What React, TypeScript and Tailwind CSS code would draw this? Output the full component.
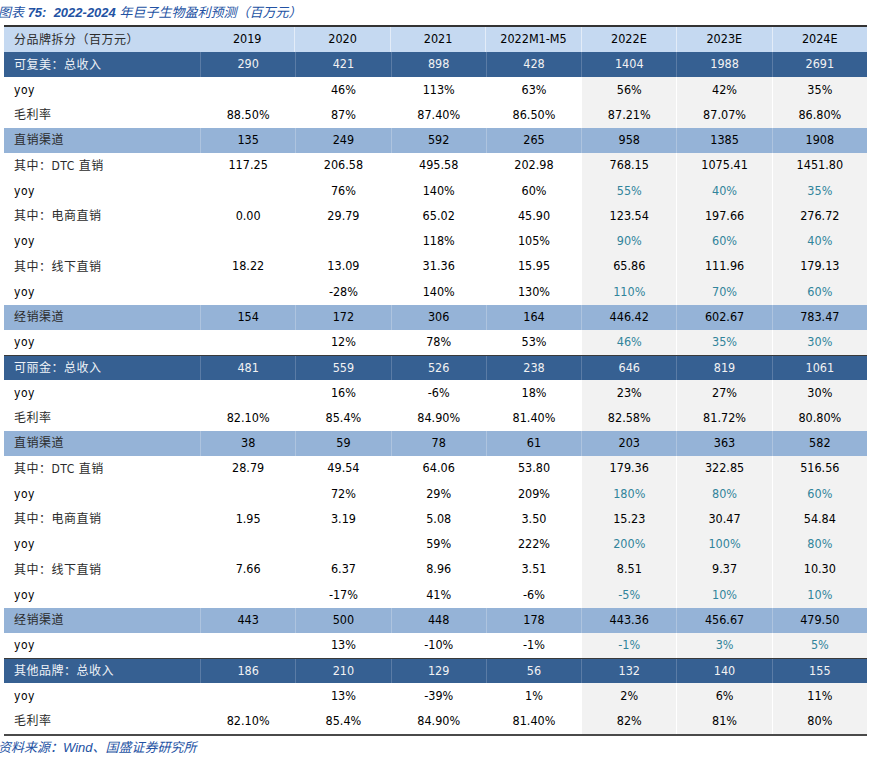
import React from "react";

type Kind = "dark" | "mid" | "norm";
type Row = { kind: Kind; label: string; vals: string[]; teal?: boolean; topLine?: boolean };

const rows: Row[] = [
  { kind: "dark", label: "可复美：总收入", vals: ["290", "421", "898", "428", "1404", "1988", "2691"] },
  { kind: "norm", label: "yoy", vals: ["", "46%", "113%", "63%", "56%", "42%", "35%"] },
  { kind: "norm", label: "毛利率", vals: ["88.50%", "87%", "87.40%", "86.50%", "87.21%", "87.07%", "86.80%"] },
  { kind: "mid", label: "直销渠道", vals: ["135", "249", "592", "265", "958", "1385", "1908"] },
  { kind: "norm", label: "其中：DTC 直销", vals: ["117.25", "206.58", "495.58", "202.98", "768.15", "1075.41", "1451.80"] },
  { kind: "norm", label: "yoy", vals: ["", "76%", "140%", "60%", "55%", "40%", "35%"], teal: true },
  { kind: "norm", label: "其中：电商直销", vals: ["0.00", "29.79", "65.02", "45.90", "123.54", "197.66", "276.72"] },
  { kind: "norm", label: "yoy", vals: ["", "", "118%", "105%", "90%", "60%", "40%"], teal: true },
  { kind: "norm", label: "其中：线下直销", vals: ["18.22", "13.09", "31.36", "15.95", "65.86", "111.96", "179.13"] },
  { kind: "norm", label: "yoy", vals: ["", "-28%", "140%", "130%", "110%", "70%", "60%"], teal: true },
  { kind: "mid", label: "经销渠道", vals: ["154", "172", "306", "164", "446.42", "602.67", "783.47"] },
  { kind: "norm", label: "yoy", vals: ["", "12%", "78%", "53%", "46%", "35%", "30%"], teal: true },
  { kind: "dark", label: "可丽金：总收入", vals: ["481", "559", "526", "238", "646", "819", "1061"], topLine: true },
  { kind: "norm", label: "yoy", vals: ["", "16%", "-6%", "18%", "23%", "27%", "30%"] },
  { kind: "norm", label: "毛利率", vals: ["82.10%", "85.4%", "84.90%", "81.40%", "82.58%", "81.72%", "80.80%"] },
  { kind: "mid", label: "直销渠道", vals: ["38", "59", "78", "61", "203", "363", "582"] },
  { kind: "norm", label: "其中：DTC 直销", vals: ["28.79", "49.54", "64.06", "53.80", "179.36", "322.85", "516.56"] },
  { kind: "norm", label: "yoy", vals: ["", "72%", "29%", "209%", "180%", "80%", "60%"], teal: true },
  { kind: "norm", label: "其中：电商直销", vals: ["1.95", "3.19", "5.08", "3.50", "15.23", "30.47", "54.84"] },
  { kind: "norm", label: "yoy", vals: ["", "", "59%", "222%", "200%", "100%", "80%"], teal: true },
  { kind: "norm", label: "其中：线下直销", vals: ["7.66", "6.37", "8.96", "3.51", "8.51", "9.37", "10.30"] },
  { kind: "norm", label: "yoy", vals: ["", "-17%", "41%", "-6%", "-5%", "10%", "10%"], teal: true },
  { kind: "mid", label: "经销渠道", vals: ["443", "500", "448", "178", "443.36", "456.67", "479.50"] },
  { kind: "norm", label: "yoy", vals: ["", "13%", "-10%", "-1%", "-1%", "3%", "5%"], teal: true },
  { kind: "dark", label: "其他品牌：总收入", vals: ["186", "210", "129", "56", "132", "140", "155"], topLine: true },
  { kind: "norm", label: "yoy", vals: ["", "13%", "-39%", "1%", "2%", "6%", "11%"] },
  { kind: "norm", label: "毛利率", vals: ["82.10%", "85.4%", "84.90%", "81.40%", "82%", "81%", "80%"] },
];

const headers = ["2019", "2020", "2021", "2022M1-M5", "2022E", "2023E", "2024E"];

const FONT = { fontFamily: '"DejaVu Sans Condensed", "Liberation Sans", "Noto Sans CJK SC", sans-serif' };
const TITLE_FONT = { fontFamily: '"Liberation Sans", "Noto Sans CJK SC", sans-serif' };

function Label({ text, kind }: { text: string; kind: Kind }) {
  const color = kind === "dark" ? "text-[#eef2f7]" : text === "yoy" ? "text-black" : "text-[#2b2b2b]";
  return (
    <div className={`w-[196px] shrink-0 pl-[10px] flex items-center text-[12px] tracking-[0.5px] ${color}`}>
      {text}
    </div>
  );
}

function DataRow({ row }: { row: Row }) {
  const rowBg = row.kind === "dark" ? "bg-[#366092]" : row.kind === "mid" ? "bg-[#95b3d7]" : "bg-white";
  const top = row.topLine ? "border-t-[1.5px] border-[#3a3a3a]" : "";
  return (
    <div className={`flex h-[25.25px] ${rowBg} ${top}`}>
      <Label text={row.label} kind={row.kind} />
      {row.vals.map((v, i) => {
        const est = i >= 4;
        let cls = "";
        if (row.kind === "dark") cls = "text-[#f2f2f2] border-l border-[#5b7ca6]";
        else if (row.kind === "mid") cls = "text-black border-l border-[#aec4df]";
        else {
          cls = `border-l border-white ${est ? "bg-[#f2f2f2]" : ""} ${est && row.teal ? "text-[#31849b]" : "text-black"}`;
        }
        return (
          <div key={i} className={`flex-1 flex items-center justify-center text-[12.5px] ${cls}`}>
            {v}
          </div>
        );
      })}
    </div>
  );
}

export default function App() {
  return (
    <div className="w-[881px] h-[769px] bg-white overflow-hidden" style={FONT}>
      <div
        className="h-[25px] leading-[25px] -ml-[2px] text-[13px] italic text-[#2352a3] whitespace-pre"
        style={TITLE_FONT}
      >
        <span>
          图表 <span className="font-bold">75:  2022-2024 </span>年巨子生物盈利预测（百万元）
        </span>
      </div>
      <div className="ml-[4px] w-[863px] border-t-2 border-[#333333] border-b-2 border-b-[#4a4a4a]">
        <div className="flex h-[25px] bg-[#c5d9f1]">
          <div className="w-[196px] shrink-0 pl-[10px] flex items-center text-[12px] tracking-[0.5px] text-[#2b2b2b]">
            分品牌拆分（百万元）
          </div>
          {headers.map((h, i) => (
            <div
              key={h}
              className={`flex-1 flex items-center justify-center text-[12.5px] text-black ${i === 0 ? "" : "border-l border-[#e3ecf8]"}`}
            >
              {h}
            </div>
          ))}
        </div>
        {rows.map((r, i) => (
          <DataRow key={i} row={r} />
        ))}
      </div>
      <div
        className="h-[24px] leading-[24px] -ml-[2px] text-[13px] italic text-[#2352a3] whitespace-pre"
        style={TITLE_FONT}
      >
        资料来源：Wind、国盛证券研究所
      </div>
    </div>
  );
}
